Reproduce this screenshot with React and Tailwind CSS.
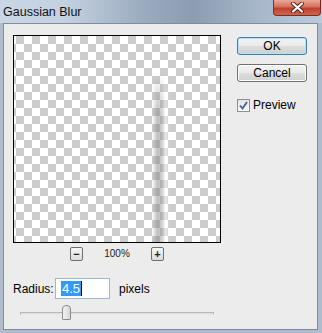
import React from "react";

const font = "font-['Liberation_Sans',Arial,sans-serif]";

const DialogButton = ({ label, focused }) => (
  <button
    type="button"
    className={[
      "flex h-[18px] w-[70px] items-center justify-center rounded-[3px] border text-[12px] leading-none text-black",
      "bg-[linear-gradient(to_bottom,#f2f2f2_0%,#ebebeb_48%,#dddddd_52%,#cfcfcf_100%)]",
      focused
        ? "border-[#3c7fb1] shadow-[inset_0_0_0_1px_#b6e2f7]"
        : "border-[#707070] shadow-[inset_0_0_0_1px_#fcfcfc]",
    ].join(" ")}
  >
    {label}
  </button>
);

const ZoomButton = ({ children }) => (
  <span className="flex h-[14px] w-[13px] items-center justify-center rounded-[2px] border border-[#6f6f6f] bg-[linear-gradient(to_bottom,#f6f6f6,#dcdcdc)] text-[11px] font-bold leading-none text-[#222]">
    {children}
  </span>
);

export default function App() {
  return (
    <div className={`flex h-[333px] w-[322px] flex-col bg-[#aebccd] ${font}`}>
      {/* title bar */}
      <div className="flex h-[23px] shrink-0 justify-between bg-[linear-gradient(to_right,#c9d6e5_0%,#c4d1e0_20%,#9aabbf_45%,#8c9db2_60%,#a5b5c8_78%,#bccbdc_100%)]">
        <span className="self-center pl-[3px] pt-[1px] text-[12.5px] text-[#111]">Gaussian Blur</span>
        <span className="mr-[1px] flex h-[16px] w-[48px] items-center justify-center rounded-b-[4px] border border-t-0 border-[#7a2d20] bg-[linear-gradient(to_bottom,#e9a796_0%,#d4715d_45%,#c0402a_55%,#d0654c_100%)]">
          <svg width="15" height="11" viewBox="0 0 15 11">
            <path d="M3 1.5 L12 9.5 M12 1.5 L3 9.5" stroke="#5a2018" strokeWidth="4" strokeLinecap="round" />
            <path d="M3 1.5 L12 9.5 M12 1.5 L3 9.5" stroke="#ffffff" strokeWidth="2.2" strokeLinecap="round" />
          </svg>
        </span>
      </div>

      {/* dialog body */}
      <div className="mb-[3px] ml-[3px] mr-[4px] flex flex-1 border border-[#7f8d9f] bg-[#ececec]">
        <div className="flex flex-col pl-[9px] pt-[11px]">
          <div className="relative h-[208px] w-[208px] border border-black bg-[conic-gradient(#cccccc_25%,#ffffff_0_50%,#cccccc_0_75%,#ffffff_0)] bg-[length:16px_16px] bg-[position:-6px_0]">
            <div className="absolute bottom-0 left-[138px] top-0 w-[18px] bg-[linear-gradient(to_right,rgba(140,140,140,0)_0%,rgba(140,140,140,0.55)_30%,rgba(150,150,150,0.45)_55%,rgba(255,255,255,0.5)_75%,rgba(255,255,255,0)_100%)] [mask-image:linear-gradient(to_bottom,transparent_18%,black_38%)]" />
          </div>

          <div className="mt-[4px] flex w-[208px] justify-center">
            <ZoomButton>−</ZoomButton>
            <span className="w-[68px] pt-[2px] text-center text-[10px] leading-none text-[#222]">100%</span>
            <ZoomButton>+</ZoomButton>
          </div>

          <div className="mt-[17px] flex items-center">
            <span className="w-[42px] text-[12px] text-black">Radius:</span>
            <div className="flex h-[21px] w-[55px] items-center border border-[#9cb6d8] bg-white pl-[5px]">
              <span className="bg-[#3399ff] px-px text-[13px] leading-[15px] text-white">4.5</span>
              <span className="h-[15px] w-px bg-black" />
            </div>
            <span className="ml-[9px] text-[12px] text-black">pixels</span>
          </div>

          <div className="relative ml-[7px] mt-[6px] flex h-[16px] w-[194px] items-center">
            <div className="h-[3px] w-full border border-[#b6b6b6] border-b-[#e8e8e8] bg-[#e2e2e2]" />
            <span className="absolute left-[42px] top-0 h-[15px] w-[9px] rounded-t-[4px] rounded-b-[1px] border border-[#8a8a8a] bg-[linear-gradient(to_right,#f4f4f4,#d6d6d6)]" />
          </div>
        </div>

        <div className="ml-[16px] flex flex-col pt-[13px]">
          <DialogButton label="OK" focused />
          <div className="mt-[9px]">
            <DialogButton label="Cancel" />
          </div>
          <label className="mt-[14px] flex items-center gap-[3px] text-[12px] text-black">
            <span className="flex h-[13px] w-[13px] items-center justify-center border border-[#8e8f8f] bg-[linear-gradient(to_bottom,#e4e4e4,#fafafa)]">
              <svg width="9" height="9" viewBox="0 0 9 9">
                <path d="M1 4.5 L3.5 7.5 L8 1" fill="none" stroke="#4a5f97" strokeWidth="1.8" />
              </svg>
            </span>
            Preview
          </label>
        </div>
      </div>
    </div>
  );
}
